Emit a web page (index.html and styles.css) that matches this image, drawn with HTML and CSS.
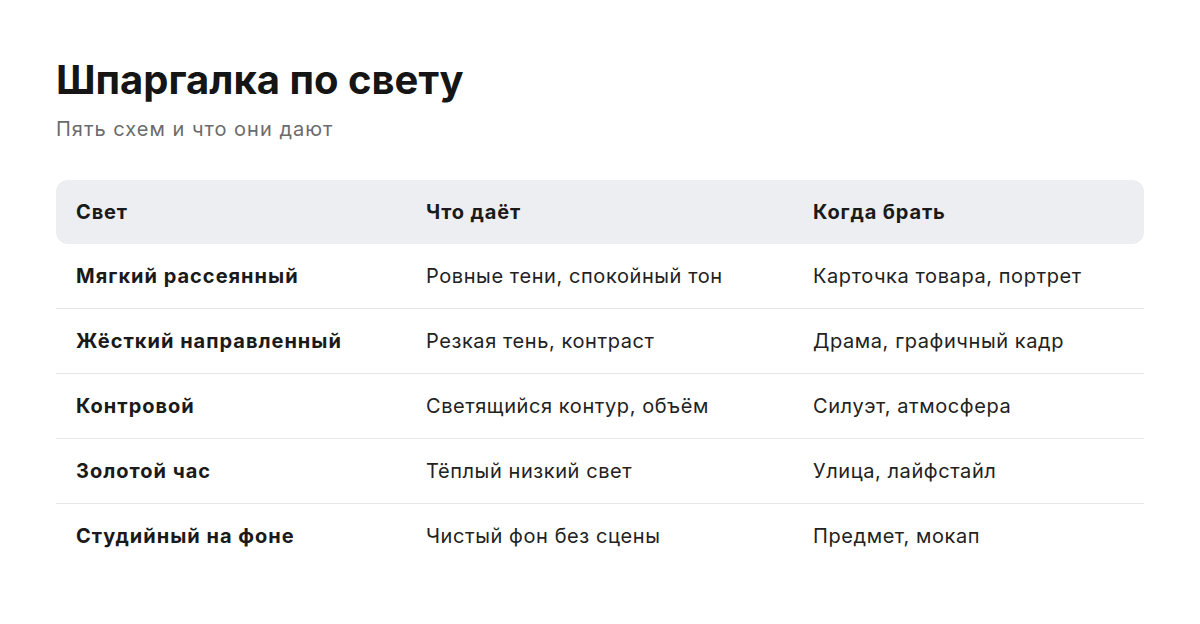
FILE: index.html
```html
<!DOCTYPE html>
<html lang="ru">
<head>
<meta charset="utf-8">
<link rel="stylesheet" href="styles.css">
</head>
<body>
<main class="page">
  <h1 class="title">Шпаргалка по свету</h1>
  <p class="subtitle">Пять схем и что они дают</p>
  <table class="sheet">
    <colgroup>
      <col class="c1">
      <col class="c2">
      <col class="c3">
    </colgroup>
    <thead>
      <tr>
        <th>Свет</th>
        <th>Что даёт</th>
        <th>Когда брать</th>
      </tr>
    </thead>
    <tbody>
      <tr>
        <td class="name">Мягкий рассеянный</td>
        <td>Ровные тени, спокойный тон</td>
        <td>Карточка товара, портрет</td>
      </tr>
      <tr>
        <td class="name">Жёсткий направленный</td>
        <td>Резкая тень, контраст</td>
        <td>Драма, графичный кадр</td>
      </tr>
      <tr>
        <td class="name">Контровой</td>
        <td>Светящийся контур, объём</td>
        <td>Силуэт, атмосфера</td>
      </tr>
      <tr>
        <td class="name">Золотой час</td>
        <td>Тёплый низкий свет</td>
        <td>Улица, лайфстайл</td>
      </tr>
      <tr>
        <td class="name">Студийный на фоне</td>
        <td>Чистый фон без сцены</td>
        <td>Предмет, мокап</td>
      </tr>
    </tbody>
  </table>
</main>
</body>
</html>
```
FILE: styles.css
```css
html, body {
  margin: 0;
  background: #ffffff;
}

body {
  font-family: Inter, "Noto Sans", "Liberation Sans", sans-serif;
  color: #1c1c1e;
}

.page {
  padding: 56px 56px 0;
}

.title {
  margin: 0;
  font-size: 40px;
  line-height: 48px;
  font-weight: 700;
  color: #151515;
}

.subtitle {
  margin: 11px 0 0;
  font-size: 20px;
  line-height: 28px;
  letter-spacing: 1px;
  color: #6b6b6d;
}

.sheet {
  margin-top: 37px;
  width: 100%;
  border-collapse: separate;
  border-spacing: 0;
  table-layout: fixed;
}

.c1 { width: 350px; }
.c2 { width: 387px; }

.sheet th {
  background: #edeef1;
  height: 64px;
  padding: 0 20px;
  text-align: left;
  font-size: 20px;
  font-weight: 700;
  letter-spacing: 0.85px;
  color: #1a1a1a;
}

.sheet th:first-child {
  border-radius: 12px 0 0 12px;
}

.sheet th:last-child {
  border-radius: 0 12px 12px 0;
}

.sheet td {
  height: 64px;
  padding: 0 20px;
  font-size: 20px;
  letter-spacing: 0.58px;
  color: #222222;
  border-bottom: 1px solid #e6e6e8;
}

.sheet tbody tr:last-child td {
  border-bottom: none;
}

.sheet td.name {
  font-weight: 700;
  letter-spacing: 1px;
  color: #1a1a1a;
}
```
